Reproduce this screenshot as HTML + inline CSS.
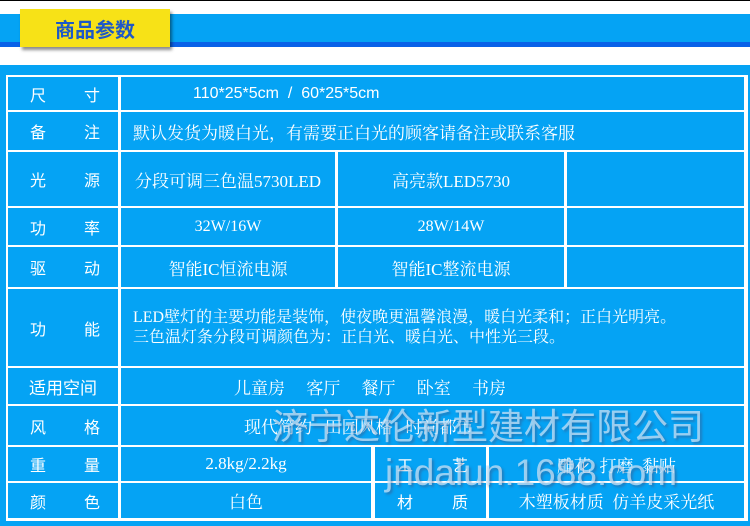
<html><head><style>
body{margin:0;width:750px;height:526px;background:#fff;position:relative;overflow:hidden;font-family:"Liberation Sans","Noto Sans CJK SC",sans-serif}
.a{position:absolute}
.c{position:absolute;background:#05a3f4;color:#fff;display:flex;align-items:center;font-size:16px;box-sizing:border-box}
.l{justify-content:space-between;padding:0 18px 0 22px;font-family:"Liberation Sans","Noto Sans CJK SC",sans-serif}
.s{font-family:"Liberation Serif","Noto Serif CJK SC",serif;font-size:16px;justify-content:center}
</style></head><body>
<div class="a" style="left:0;top:0;width:750px;height:1px;background:#000"></div>
<div class="a" style="left:0;top:14px;width:750px;height:28px;background:#05a3f4"></div>
<div class="a" style="left:0;top:42px;width:750px;height:5px;background:#0a62e8"></div>
<div class="a" style="left:20px;top:9px;width:150px;height:38px;background:#f7e217;box-shadow:2px 3px 3px rgba(0,0,0,.45);color:#1d58c8;font-weight:bold;font-size:20px;display:flex;align-items:center;justify-content:center">商品参数</div>
<div class="a" style="left:0;top:65px;width:750px;height:461px;background:#05a3f4"></div>
<div class="a" style="left:6px;top:75px;width:742px;height:446px;background:#fff"></div>

<div class="c l" style="left:8px;top:77px;width:110px;height:33px"><span>尺</span><span>寸</span></div>
<div class="c" style="left:121px;top:77px;width:623px;height:33px;padding-left:72px;font-size:16px">110*25*5cm &nbsp;/ &nbsp;60*25*5cm</div>

<div class="c l" style="left:8px;top:112px;width:110px;height:38px"><span>备</span><span>注</span></div>
<div class="c s" style="left:121px;top:112px;width:623px;height:38px;justify-content:flex-start;padding-left:12px;font-size:17px">默认发货为暖白光，有需要正白光的顾客请备注或联系客服</div>

<div class="c l" style="left:8px;top:152px;width:110px;height:54px"><span>光</span><span>源</span></div>
<div class="c s" style="left:121px;top:152px;width:214px;height:54px;font-size:17px">分段可调三色温5730LED</div>
<div class="c s" style="left:338px;top:152px;width:226px;height:54px;font-size:17px">高亮款LED5730</div>
<div class="c s" style="left:567px;top:152px;width:177px;height:54px"></div>

<div class="c l" style="left:8px;top:208px;width:110px;height:37px"><span>功</span><span>率</span></div>
<div class="c s" style="left:121px;top:208px;width:214px;height:37px">32W/16W</div>
<div class="c s" style="left:338px;top:208px;width:226px;height:37px">28W/14W</div>
<div class="c s" style="left:567px;top:208px;width:177px;height:37px"></div>

<div class="c l" style="left:8px;top:247px;width:110px;height:40px"><span>驱</span><span>动</span></div>
<div class="c s" style="left:121px;top:247px;width:214px;height:40px;font-size:17px">智能IC恒流电源</div>
<div class="c s" style="left:338px;top:247px;width:226px;height:40px;font-size:17px">智能IC整流电源</div>
<div class="c s" style="left:567px;top:247px;width:177px;height:40px"></div>

<div class="c l" style="left:8px;top:289px;width:110px;height:77px"><span>功</span><span>能</span></div>
<div class="c s" style="left:121px;top:289px;width:623px;height:77px;justify-content:flex-start;padding:0 12px;line-height:20px;font-size:16px">LED壁灯的主要功能是装饰，使夜晚更温馨浪漫，暖白光柔和；正白光明亮。<br>三色温灯条分段可调颜色为：正白光、暖白光、中性光三段。</div>

<div class="c" style="left:8px;top:368px;width:110px;height:36px;justify-content:center;font-size:17px">适用空间</div>
<div class="c s" style="left:121px;top:368px;width:623px;height:36px;justify-content:flex-start;padding-left:113px;font-size:17px">儿童房&nbsp;&nbsp;&nbsp;&nbsp; 客厅&nbsp;&nbsp;&nbsp;&nbsp; 餐厅&nbsp;&nbsp;&nbsp;&nbsp; 卧室&nbsp;&nbsp;&nbsp;&nbsp; 书房</div>

<div class="c l" style="left:8px;top:406px;width:110px;height:39px"><span>风</span><span>格</span></div>
<div class="c s" style="left:121px;top:406px;width:623px;height:39px;justify-content:flex-start;padding-left:123px;font-size:17px">现代简约&nbsp;&nbsp; 田园风格&nbsp;&nbsp; 时尚都市</div>

<div class="c l" style="left:8px;top:447px;width:110px;height:34px"><span>重</span><span>量</span></div>
<div class="c s" style="left:121px;top:447px;width:250px;height:34px;font-size:17px">2.8kg/2.2kg</div>
<div class="c l" style="left:375px;top:447px;width:111px;height:34px"><span>工</span><span>艺</span></div>
<div class="c s" style="left:489px;top:447px;width:255px;height:34px;font-size:17px">雕花&nbsp; 打磨&nbsp; 黏贴</div>

<div class="c l" style="left:8px;top:483px;width:110px;height:35px"><span>颜</span><span>色</span></div>
<div class="c s" style="left:121px;top:483px;width:250px;height:35px;font-size:17px">白色</div>
<div class="c l" style="left:375px;top:483px;width:111px;height:35px"><span>材</span><span>质</span></div>
<div class="c s" style="left:489px;top:483px;width:255px;height:35px;font-size:17px">木塑板材质&nbsp; 仿羊皮采光纸</div>

<div class="a" style="left:272px;top:398px;font-size:36px;color:rgba(200,225,245,.75);text-shadow:2px 2px 2px rgba(60,90,140,.5);white-space:nowrap">济宁达伦新型建材有限公司</div>
<div class="a" style="left:385px;top:452px;font-size:37px;color:rgba(200,225,245,.75);text-shadow:2px 2px 2px rgba(60,90,140,.5);white-space:nowrap">jndalun.1688.com</div>
</body></html>
